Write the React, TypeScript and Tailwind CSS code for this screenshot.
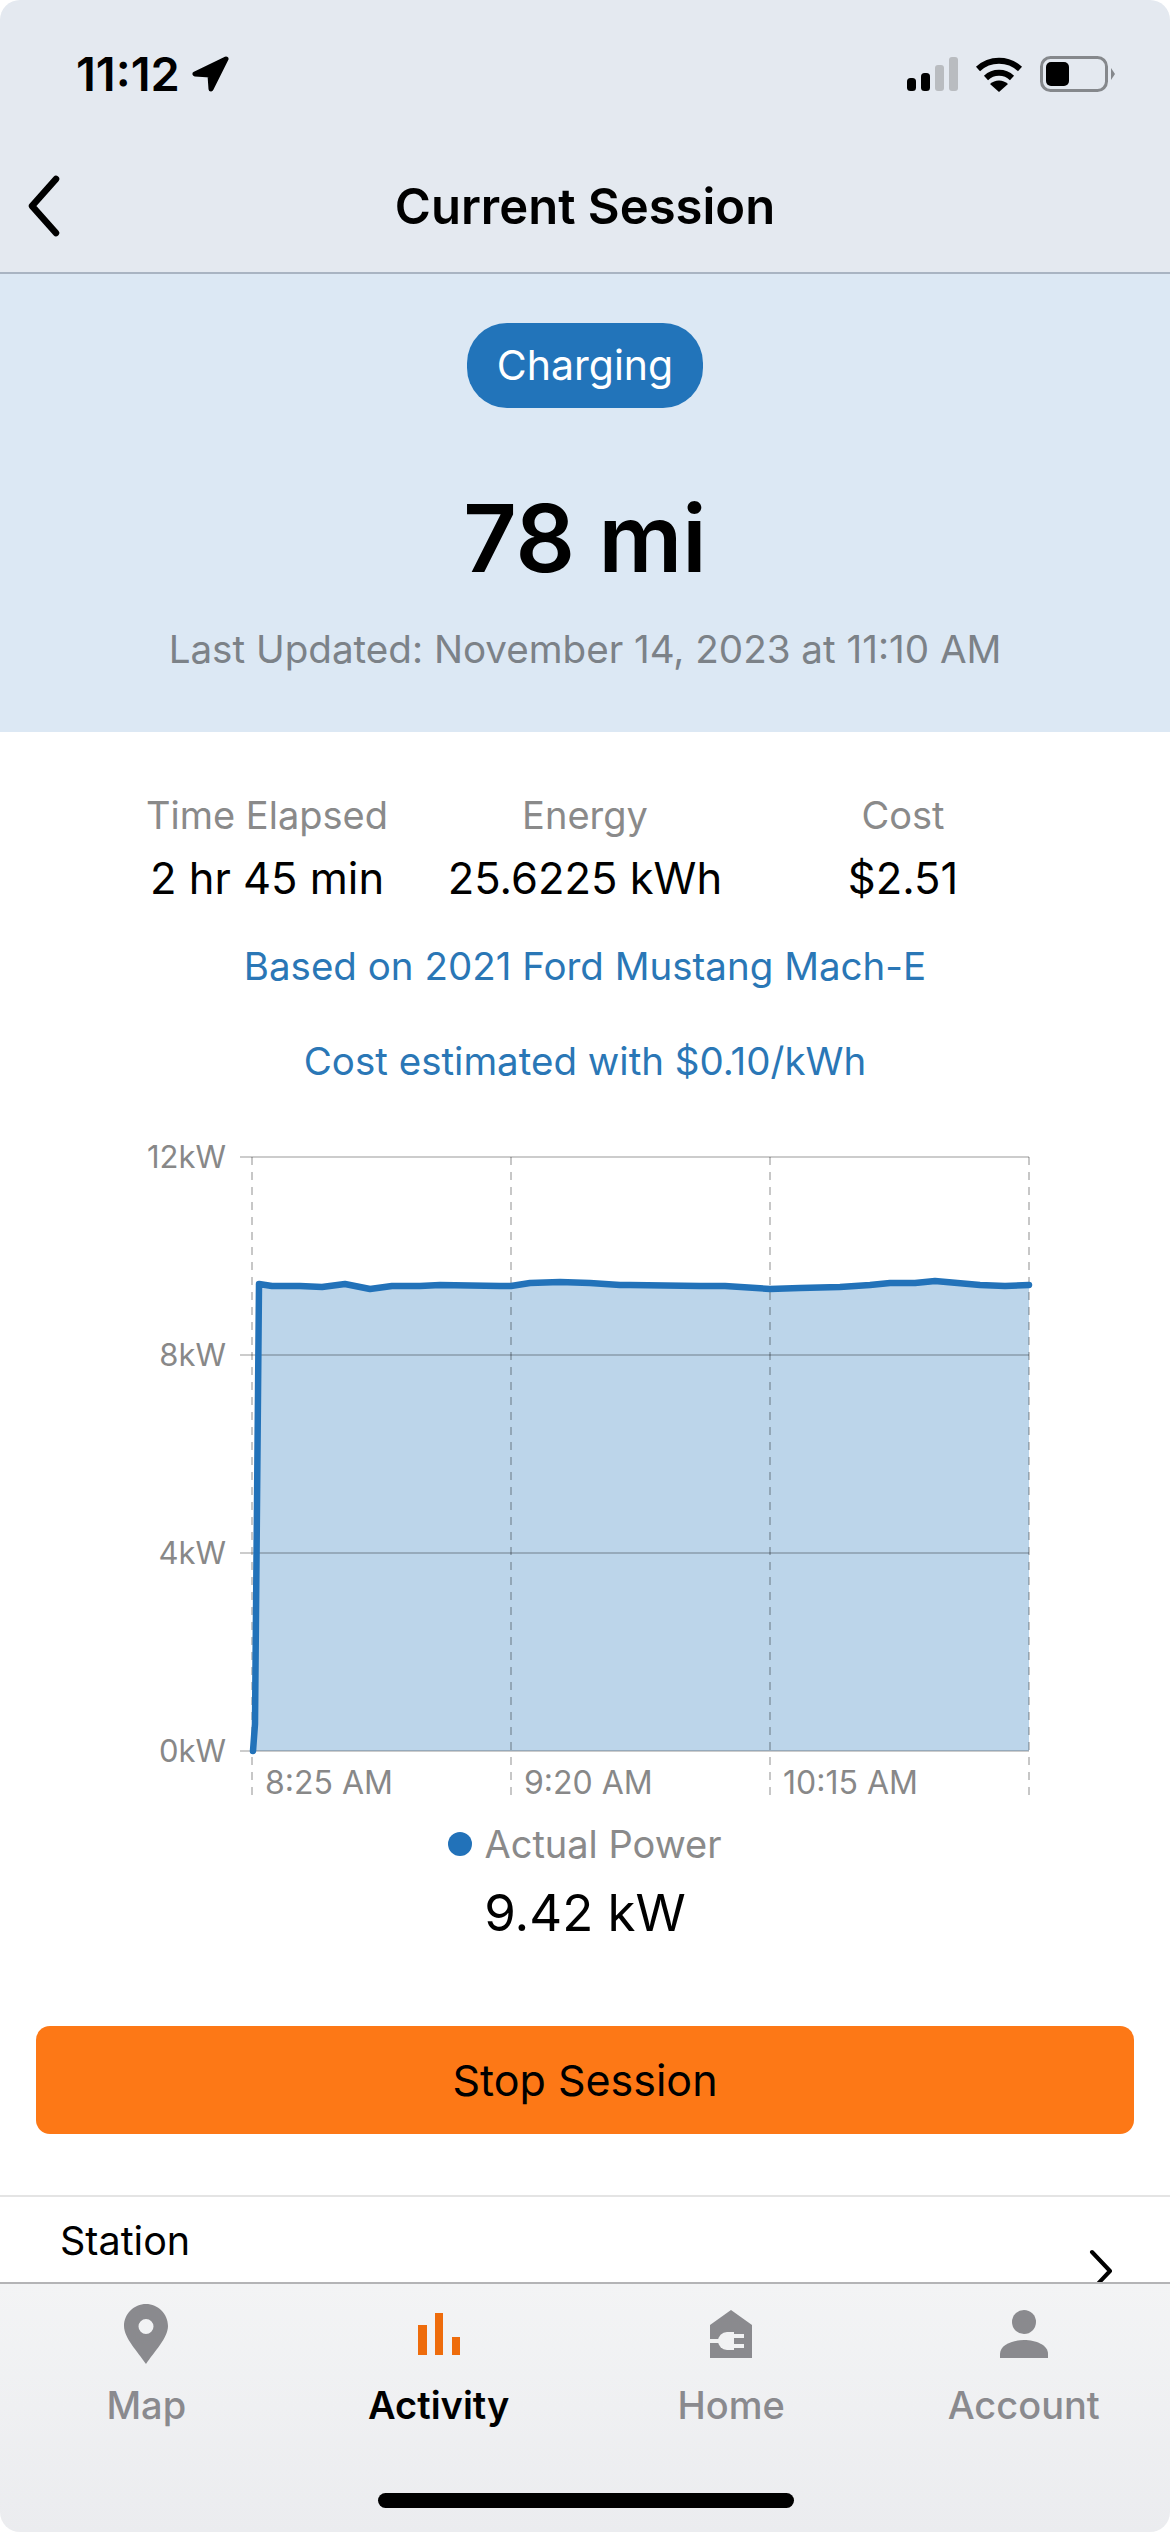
const linePoints =
  '253,1752 255,1725 259,1285 272,1287 300,1287 322,1288 345,1285 370,1290 392,1287 420,1287 440,1286 500,1287 511,1287 530,1284 560,1283 590,1284 620,1286 630,1286 700,1287 725,1287 770,1290 800,1289 840,1288 870,1286 890,1284 915,1284 935,1282 980,1286 1005,1287 1029,1286'

function PowerChart() {
  return (
    <svg viewBox="0 1130 1170 680" className="block w-[1170px] h-[680px]" style={{ fontFamily: 'Inter, sans-serif' }}>
      <polygon points={`${linePoints} 1029,1752 252,1752`} fill="#2274ba" fillOpacity="0.3" />
      {[1158, 1356, 1554, 1752].map((y) => (
        <line key={y} x1="240" x2="1029" y1={y} y2={y} stroke="#000" strokeOpacity="0.2" strokeWidth="2" />
      ))}
      {[252, 511, 770, 1029].map((x) => (
        <line key={x} x1={x} x2={x} y1="1158" y2="1800" stroke="#000" strokeOpacity="0.22" strokeWidth="2" strokeDasharray="8 7" />
      ))}
      <polyline points={linePoints} fill="none" stroke="#2272b9" strokeWidth="6.5" strokeLinejoin="round" strokeLinecap="round" />
      <g fill="#888888" fontSize="31" textAnchor="end">
        <text x="226" y="1169">12kW</text>
        <text x="226" y="1367">8kW</text>
        <text x="226" y="1565">4kW</text>
        <text x="226" y="1763">0kW</text>
      </g>
      <g fill="#888888" fontSize="32">
        <text x="265" y="1795">8:25 AM</text>
        <text x="524" y="1795">9:20 AM</text>
        <text x="783" y="1795">10:15 AM</text>
      </g>
    </svg>
  )
}

function StatusBar() {
  return (
    <div className="h-[112px] flex items-end justify-between pl-[76px] pr-[55px] pb-[20px]">
      <div className="flex items-center gap-[12px]">
        <span className="text-[47px] leading-[36px] font-semibold text-black">11:12</span>
        <svg width="37" height="36" viewBox="0 0 37 36">
          <path d="M34 3 L3 18 L18 19 L19 33 Z" fill="#000" stroke="#000" strokeWidth="5" strokeLinejoin="round" />
        </svg>
      </div>
      <div className="flex items-center gap-[17px]">
        <svg width="51" height="36" viewBox="0 0 51 36">
          <rect x="0" y="22" width="9" height="13" rx="3.5" fill="#000" />
          <rect x="14" y="17" width="9" height="18" rx="3.5" fill="#000" />
          <rect x="28" y="9" width="9" height="26" rx="3" fill="#b9bcc0" />
          <rect x="42" y="1" width="9" height="34" rx="3" fill="#b9bcc0" />
        </svg>
        <svg width="48" height="36" viewBox="0 0 48 36">
          <path d="M3 13 A31 31 0 0 1 45 13" fill="none" stroke="#000" strokeWidth="6" />
          <path d="M11 22 A19 19 0 0 1 37 22" fill="none" stroke="#000" strokeWidth="6" />
          <path d="M24 36 L15 28 A13 13 0 0 1 33 28 Z" fill="#000" />
        </svg>
        <svg width="75" height="36" viewBox="0 0 75 36">
          <rect x="1.5" y="1.5" width="65" height="33" rx="9" fill="none" stroke="#85888c" strokeWidth="3" />
          <rect x="6" y="6" width="23" height="24" rx="5" fill="#000" />
          <path d="M71 12 L75 18 L71 24 Z" fill="#85888c" />
        </svg>
      </div>
    </div>
  )
}

function TabIcon({ name }: { name: string }) {
  if (name === 'Map') {
    return (
      <svg width="44" height="60" viewBox="0 0 44 60">
        <path fillRule="evenodd" d="M22 0 C34 0 44 10 44 22 C44 34 30 48 22 60 C14 48 0 34 0 22 C0 10 10 0 22 0 Z M22 15 A7.5 7.5 0 1 0 22 30 A7.5 7.5 0 1 0 22 15 Z" fill="#8a8a8e" />
      </svg>
    )
  }
  if (name === 'Activity') {
    return (
      <svg width="42" height="60" viewBox="0 0 42 60">
        <rect x="0" y="21" width="9" height="30" fill="#ee6c0c" />
        <rect x="17" y="9" width="8" height="42" fill="#ee6c0c" />
        <rect x="34" y="33" width="8" height="18" fill="#ee6c0c" />
      </svg>
    )
  }
  if (name === 'Home') {
    return (
      <svg width="42" height="60" viewBox="0 0 42 60">
        <path d="M21 6 L42 21 L42 54 L0 54 L0 21 Z" fill="#8a8a8e" />
        <path d="M0 37 L12 37 M22 32 L34 32 M22 42 L34 42" stroke="#f1f2f3" strokeWidth="4" />
        <path d="M24 28 L24 46 L17 46 A9 9 0 0 1 17 28 Z" fill="#f1f2f3" />
      </svg>
    )
  }
  return (
    <svg width="48" height="60" viewBox="0 0 48 60">
      <circle cx="24" cy="18" r="12" fill="#8a8a8e" />
      <path d="M0 54 L0 50 C0 41 12 36 24 36 C36 36 48 41 48 50 L48 54 Z" fill="#8a8a8e" />
    </svg>
  )
}

function TabBar() {
  const tabs = ['Map', 'Activity', 'Home', 'Account']
  return (
    <div className="relative h-[250px] shrink-0 border-t-2 border-[#b4b4b6] bg-gradient-to-b from-[#f3f4f5] to-[#ebecef]">
      <div className="grid grid-cols-4 pt-[20px]">
        {tabs.map((tab) => (
          <div key={tab} className="flex flex-col items-center">
            <TabIcon name={tab} />
            <span className={tab === 'Activity' ? 'mt-[18px] text-[38px] leading-[46px] font-semibold text-black' : 'mt-[18px] text-[38px] leading-[46px] font-medium text-[#8a8a8e]'}>
              {tab}
            </span>
          </div>
        ))}
      </div>
      <div className="absolute left-[378px] bottom-[24px] w-[416px] h-[15px] rounded-full bg-black" />
    </div>
  )
}

export default function App() {
  return (
    <div className="w-[1170px] h-[2532px] flex flex-col overflow-hidden rounded-[20px] bg-white" style={{ fontFamily: 'Inter, sans-serif' }}>
      <div className="h-[274px] shrink-0 bg-[#e4e9f0] border-b-2 border-[#a9b4c2]">
        <StatusBar />
        <div className="relative h-[160px] flex items-start justify-center">
          <svg className="absolute left-[24px] top-[62px]" width="40" height="64" viewBox="0 0 40 64">
            <path d="M32 5 L8 32 L32 59" fill="none" stroke="#000" strokeWidth="6.5" strokeLinecap="round" strokeLinejoin="round" />
          </svg>
          <h1 className="mt-[66px] text-[49px] leading-[58px] font-semibold text-black">Current Session</h1>
        </div>
      </div>

      <div className="flex-1 min-h-0 overflow-hidden">
        <div className="h-[458px] bg-[#dce8f4] flex flex-col items-center pt-[49px]">
          <div className="w-[236px] h-[85px] shrink-0 rounded-[40px] bg-[#2274ba] flex items-center justify-center text-[41px] text-white">Charging</div>
          <div className="mt-[75px] text-[93px] leading-[110px] font-semibold text-black">78 mi</div>
          <div className="mt-[33px] text-[38.6px] leading-[46px] text-[#7c8288]">Last Updated: November 14, 2023 at 11:10 AM</div>
        </div>

        <div className="pt-[60px]">
          <div className="grid grid-cols-3 w-[954px] mx-auto text-center leading-[46px]">
            <div>
              <div className="text-[38px] text-[#8a8a8a]">Time Elapsed</div>
              <div className="mt-[17px] text-[43.5px] text-black">2 hr 45 min</div>
            </div>
            <div>
              <div className="text-[38px] text-[#8a8a8a]">Energy</div>
              <div className="mt-[17px] text-[43.5px] text-black">25.6225 kWh</div>
            </div>
            <div>
              <div className="text-[38px] text-[#8a8a8a]">Cost</div>
              <div className="mt-[17px] text-[43.5px] text-black">$2.51</div>
            </div>
          </div>
          <div className="mt-[42px] text-center text-[38.5px] leading-[46px] text-[#2a77b6]">Based on 2021 Ford Mustang Mach-E</div>
          <div className="mt-[49px] text-center text-[38.5px] leading-[46px] text-[#2a77b6]">Cost estimated with $0.10/kWh</div>
          <div className="mt-[45px]">
            <PowerChart />
          </div>
          <div className="mt-[12px] flex items-center justify-center gap-[12px]">
            <span className="w-[24px] h-[24px] rounded-full bg-[#2272b9]" />
            <span className="text-[38px] leading-[46px] text-[#8a8a8a]">Actual Power</span>
          </div>
          <div className="mt-[14px] text-center text-[51px] leading-[64px] text-black">9.42 kW</div>
          <div className="mx-[36px] mt-[81px] h-[108px] rounded-[14px] bg-[#fd7816] flex items-center justify-center text-[43px] text-black">Stop Session</div>
          <div className="mt-[61px] border-t-2 border-[#e4e4e4] relative pl-[60px] pt-[21px] text-[39.5px] leading-[46px] text-black">
            Station
            <svg className="absolute left-[1088px] top-[52px]" width="26" height="44" viewBox="0 0 26 44">
              <path d="M4 3 L22 22 L4 41" fill="none" stroke="#000" strokeWidth="4" strokeLinecap="round" strokeLinejoin="round" />
            </svg>
          </div>
        </div>
      </div>

      <TabBar />
    </div>
  )
}
